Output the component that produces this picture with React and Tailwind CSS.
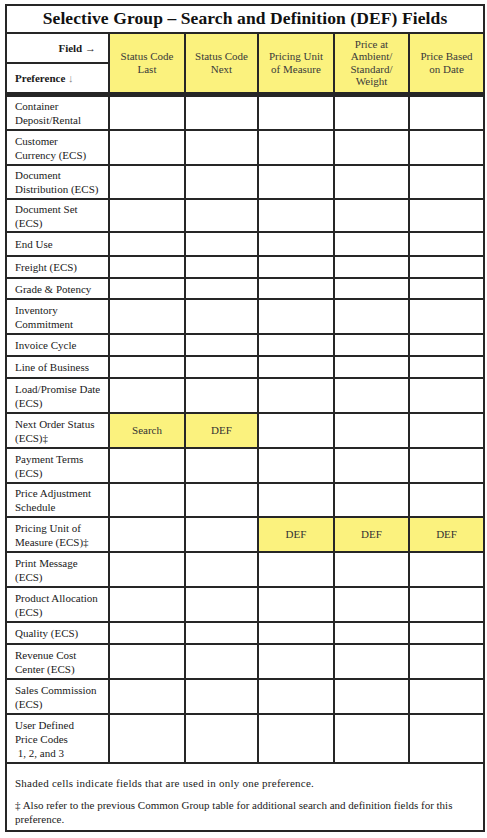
import React from 'react'

const B = 'border-2 border-[#262626]'
const YELLOW = 'bg-[#fbf27e]'

const FIELDS = [
  ['Status Code', 'Last'],
  ['Status Code', 'Next'],
  ['Pricing Unit', 'of Measure'],
  ['Price at', 'Ambient/', 'Standard/', 'Weight'],
  ['Price Based', 'on Date'],
]

// label lines, row height, shaded cells
const ROWS = [
  { label: ['Container', 'Deposit/Rental'], h: 36 },
  { label: ['Customer', 'Currency (ECS)'], h: 35 },
  { label: ['Document', 'Distribution (ECS)'], h: 34 },
  { label: ['Document Set', '(ECS)'], h: 33 },
  { label: ['End Use'], h: 24 },
  { label: ['Freight (ECS)'], h: 22 },
  { label: ['Grade & Potency'], h: 21 },
  { label: ['Inventory', 'Commitment'], h: 35 },
  { label: ['Invoice Cycle'], h: 22 },
  { label: ['Line of Business'], h: 22 },
  { label: ['Load/Promise Date', '(ECS)'], h: 35 },
  { label: ['Next Order Status', '(ECS)‡'], h: 35, cells: { 0: 'Search', 1: 'DEF' } },
  { label: ['Payment Terms', '(ECS)'], h: 35 },
  { label: ['Price Adjustment', 'Schedule'], h: 34 },
  { label: ['Pricing Unit of', 'Measure (ECS)‡'], h: 35, cells: { 2: 'DEF', 3: 'DEF', 4: 'DEF' } },
  { label: ['Print Message', '(ECS)'], h: 35 },
  { label: ['Product Allocation', '(ECS)'], h: 35 },
  { label: ['Quality (ECS)'], h: 22 },
  { label: ['Revenue Cost', 'Center (ECS)'], h: 35 },
  { label: ['Sales Commission', '(ECS)'], h: 35 },
  { label: ['User Defined', 'Price Codes', '\u00a01, 2, and 3'], h: 49 },
]

function Lines({ lines }) {
  return lines.map((l, i) => <div key={i}>{l}</div>)
}

export default function App() {
  return (
    <div className="bg-white w-[487px] h-[838px] pt-[4px] pl-[5px] font-[family-name:'Liberation_Serif','Times_New_Roman',serif]">
      <table className="table-fixed border-collapse w-[478px] text-[11px] text-[#1a1a1a] font-[family-name:'Liberation_Serif','Times_New_Roman',serif]">
        <colgroup>
          <col className="w-[103px]" />
          <col className="w-[76px]" />
          <col className="w-[73px]" />
          <col className="w-[76px]" />
          <col className="w-[75px]" />
          <col className="w-[75px]" />
        </colgroup>
        <tbody>
          <tr className="h-[28px]">
            <td colSpan={6} className={`${B} text-center font-bold text-[17.5px] tracking-[0.1px] leading-none text-[#111]`}>
              Selective Group – Search and Definition (DEF) Fields
            </td>
          </tr>
          <tr className="h-[30px]">
            <td className={`${B} text-right pr-[12px] font-bold align-middle`}>Field →</td>
            {FIELDS.map((f, i) => (
              <td key={i} rowSpan={2} className={`${B} border-b-[5px] border-b-double ${YELLOW} text-center align-middle leading-[12.5px] text-[#3a3a3a]`}>
                <Lines lines={f} />
              </td>
            ))}
          </tr>
          <tr className="h-[31px]">
            <td className={`${B} border-b-[5px] border-b-double pl-[8px] font-bold align-middle`}>
              Preference <span className="text-[#888] font-normal">↓</span>
            </td>
          </tr>
          {ROWS.map((r, ri) => (
            <tr key={ri} style={{ height: r.h }}>
              <td className={`${B} pl-[8px] align-middle leading-[14px]`}>
                <Lines lines={r.label} />
              </td>
              {[0, 1, 2, 3, 4].map((c) => {
                const v = r.cells && r.cells[c]
                return (
                  <td key={c} className={`${B} text-center align-middle text-[#333] ${v ? YELLOW : ''}`}>
                    {v || ''}
                  </td>
                )
              })}
            </tr>
          ))}
          <tr className="h-[68px]">
            <td colSpan={6} className={`${B} pl-[8px] pt-[12px] pb-[4px] align-top leading-[14px]`}>
              <p className="tracking-[0.25px]">Shaded cells indicate fields that are used in only one preference.</p>
              <p className="mt-[8px]">‡ Also refer to the previous Common Group table for additional search and definition fields for this preference.</p>
            </td>
          </tr>
        </tbody>
      </table>
    </div>
  )
}
